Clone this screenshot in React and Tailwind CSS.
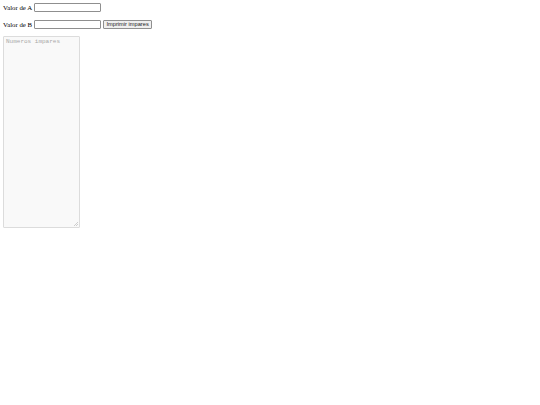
import React from 'react';

export default function App() {
  return (
    <div className="min-h-[405px] bg-white p-[3px] font-['Liberation_Serif',serif] text-[6.8px] text-black">
      <div className="flex h-[9px] items-center gap-[2px]">
        <label className="pt-[2px]">Valor de A</label>
        <input
          type="text"
          className="h-[9px] w-[67px] rounded-[1px] border border-[#8f8f8f] bg-white"
        />
      </div>
      <div className="mt-[8px] flex h-[9px] items-center gap-[2px]">
        <label className="pt-[2px]">Valor de B</label>
        <input
          type="text"
          className="h-[9px] w-[67px] rounded-[1px] border border-[#8f8f8f] bg-white"
        />
        <button className="flex h-[9px] w-[49px] items-center justify-center rounded-[1px] border border-[#8f8f8f] bg-[#efefef] font-['Liberation_Sans',sans-serif] text-[5.7px] leading-none text-[#222]">
          Imprimir impares
        </button>
      </div>
      <div className="mt-[7px] relative h-[192px] w-[77px] rounded-[1px] border border-[#dcdcdc] bg-[#f9f9f9] px-[2px] py-[1px]">
        <span className="block font-['Liberation_Mono',monospace] text-[6px] leading-[7px] text-[#a8a8a8]">
          Numeros impares
        </span>
        <svg className="absolute bottom-[1px] right-[1px]" width="4" height="4" viewBox="0 0 4 4">
          <path d="M4 0L0 4M4 2L2 4" stroke="#b0b0b0" strokeWidth="0.6" />
        </svg>
      </div>
    </div>
  );
}
